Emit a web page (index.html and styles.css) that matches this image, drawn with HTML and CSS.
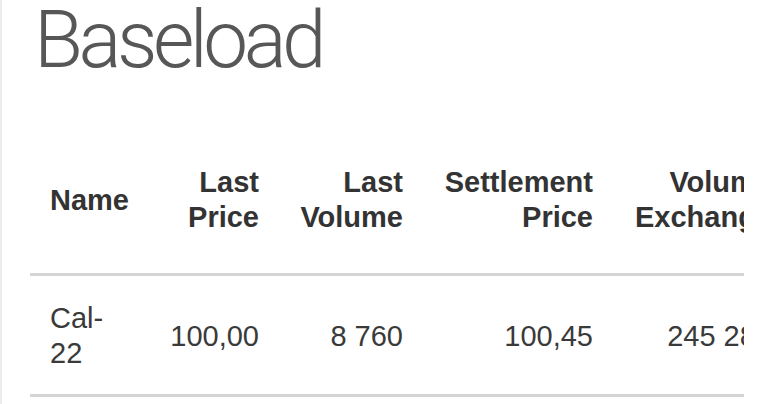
FILE: index.html
```html
<!DOCTYPE html>
<html lang="en">
<head>
<meta charset="utf-8">
<title>Baseload</title>
<link rel="stylesheet" href="styles.css">
</head>
<body>
<main class="page">
  <h1 class="title">Baseload</h1>
  <div class="table-wrap">
    <table class="prices">
      <colgroup>
        <col class="w-name">
        <col class="w-last">
        <col class="w-vol">
        <col class="w-settle">
        <col class="w-exch">
      </colgroup>
      <thead>
        <tr>
          <th>Name</th>
          <th class="num">Last<br>Price</th>
          <th class="num">Last<br>Volume</th>
          <th class="num">Settlement<br>Price</th>
          <th class="num">Volume<br>Exchange</th>
        </tr>
      </thead>
      <tbody>
        <tr>
          <td>Cal-<br>22</td>
          <td class="num">100,00</td>
          <td class="num">8&nbsp;760</td>
          <td class="num">100,45</td>
          <td class="num">245&nbsp;280</td>
        </tr>
      </tbody>
    </table>
  </div>
</main>
</body>
</html>
```

FILE: styles.css
```css
html, body {
  margin: 0;
  padding: 0;
  background: #ffffff;
}

.page {
  min-height: 404px;
  border-left: 2px solid #ececec;
  padding-left: 28px;
  box-sizing: border-box;
}

.title {
  margin: 0;
  padding-left: 4px;
  font-family: Roboto, "Liberation Sans", sans-serif;
  font-weight: 300;
  font-size: 80px;
  line-height: 80px;
  letter-spacing: -4.5px;
  color: #575757;
}

.table-wrap {
  margin-top: 48px;
  width: 714px;
  overflow: hidden;
}

.prices {
  table-layout: fixed;
  width: 763px;
  border-collapse: collapse;
  font-family: "Liberation Sans", Arial, sans-serif;
  font-size: 29px;
  line-height: 35px;
  color: #333333;
  white-space: nowrap;
}

.w-name { width: 120px; }
.w-last { width: 130px; }
.w-vol { width: 144px; }
.w-settle { width: 190px; }
.w-exch { width: 179px; }

.prices th,
.prices td {
  box-sizing: border-box;
  position: relative;
  padding: 37px 21px 38px 20px;
  text-align: left;
  vertical-align: middle;
  border-bottom: 3px solid #d4d4d4;
  overflow: hidden;
}

.prices th + th::before,
.prices td + td::before {
  content: "";
  position: absolute;
  left: 0;
  bottom: -3px;
  width: 1px;
  height: 3px;
  background: #bdbdbd;
}

.prices th {
  font-weight: 700;
  color: #333333;
}

.prices td {
  padding-top: 25px;
  padding-bottom: 23px;
  color: #3a3a3a;
}

.prices .num {
  text-align: right;
}
```
